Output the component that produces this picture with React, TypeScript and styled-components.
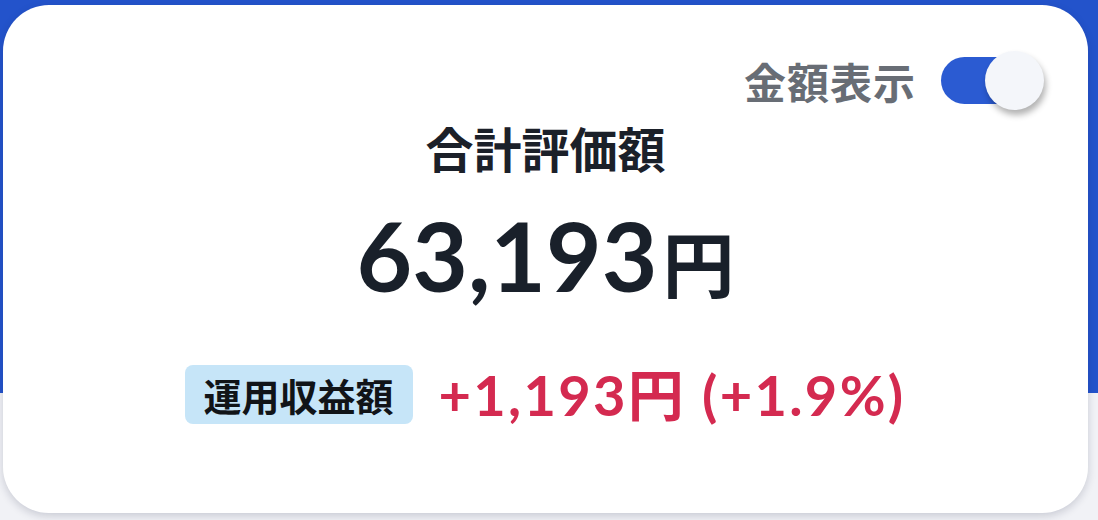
import React from "react";
import styled, { createGlobalStyle } from "styled-components";

const GlobalStyle = createGlobalStyle`
  html, body {
    margin: 0;
    padding: 0;
    width: 1098px;
    height: 520px;
    overflow: hidden;
    background: #f1f2f6;
  }
  * { box-sizing: border-box; }
`;

const Page = styled.div`
  width: 1098px;
  height: 520px;
  padding: 5px 10px 0 3px;
  background: linear-gradient(to bottom, #2353cb 0, #2353cb 393px, #f1f2f6 393px, #f1f2f6 100%);
  font-family: "Lato", "Noto Sans CJK JP", sans-serif;
`;

const Card = styled.section`
  height: 508px;
  background: #ffffff;
  border-radius: 46px;
  box-shadow: 0 3px 8px rgba(20, 30, 60, 0.18);
  padding-top: 46px;
  display: flex;
  flex-direction: column;
  align-items: center;
`;

const ToggleRow = styled.div`
  align-self: stretch;
  height: 59px;
  padding-right: 44px;
  display: flex;
  justify-content: flex-end;
  align-items: center;
  gap: 25px;
`;

const ToggleLabel = styled.span`
  font-family: "Noto Sans CJK JP", sans-serif;
  font-weight: 700;
  font-size: 42px;
  letter-spacing: 1px;
  line-height: 1;
  color: #686d75;
`;

const SwitchRoot = styled.div`
  position: relative;
  width: 103px;
  height: 59px;
  display: flex;
  align-items: center;
`;

const Track = styled.div`
  width: 90px;
  height: 47px;
  border-radius: 24px;
  background: #2b5bd2;
`;

const Knob = styled.div`
  position: absolute;
  top: 0;
  right: 0;
  width: 59px;
  height: 59px;
  border-radius: 50%;
  background: #f4f6fa;
  box-shadow: 2px 5px 6px rgba(0, 0, 0, 0.3);
`;

const Title = styled.h2`
  margin: 13px 0 0;
  font-family: "Noto Sans CJK JP", sans-serif;
  font-weight: 700;
  font-size: 48px;
  line-height: 48px;
  color: #1b2029;
`;

const Total = styled.div`
  margin-top: 36px;
  font-family: "Lato", "Noto Sans CJK JP", sans-serif;
  font-weight: 700;
  font-size: 96px;
  line-height: 1;
  color: #19202a;
  display: flex;
  align-items: baseline;
  gap: 5px;
`;

const Unit = styled.span<{ $size: number }>`
  font-family: "Noto Sans CJK JP", sans-serif;
  font-weight: 700;
  font-size: ${(p) => p.$size}px;
  line-height: 1;
`;

const ProfitRow = styled.div`
  margin-top: 62px;
  display: flex;
  align-items: center;
  gap: 26px;
`;

const Badge = styled.span`
  height: 59px;
  padding: 0 19px 0 18px;
  border-radius: 8px;
  background: #c6e5f8;
  display: flex;
  align-items: center;
  font-family: "Noto Sans CJK JP", sans-serif;
  font-weight: 700;
  font-size: 38px;
  color: #111418;
`;

const Profit = styled.span`
  font-family: "Lato", "Noto Sans CJK JP", sans-serif;
  font-weight: 700;
  font-size: 56px;
  line-height: 1;
  letter-spacing: 2.3px;
  color: #d42a50;
`;

export default function App() {
  return (
    <>
      <GlobalStyle />
      <Page>
        <Card>
          <ToggleRow>
            <ToggleLabel>金額表示</ToggleLabel>
            <SwitchRoot role="switch" aria-checked="true">
              <Track />
              <Knob />
            </SwitchRoot>
          </ToggleRow>
          <Title>合計評価額</Title>
          <Total>
            <span>63,193</span>
            <Unit $size={72}>円</Unit>
          </Total>
          <ProfitRow>
            <Badge>運用収益額</Badge>
            <Profit>+1,193円 (+1.9%)</Profit>
          </ProfitRow>
        </Card>
      </Page>
    </>
  );
}
